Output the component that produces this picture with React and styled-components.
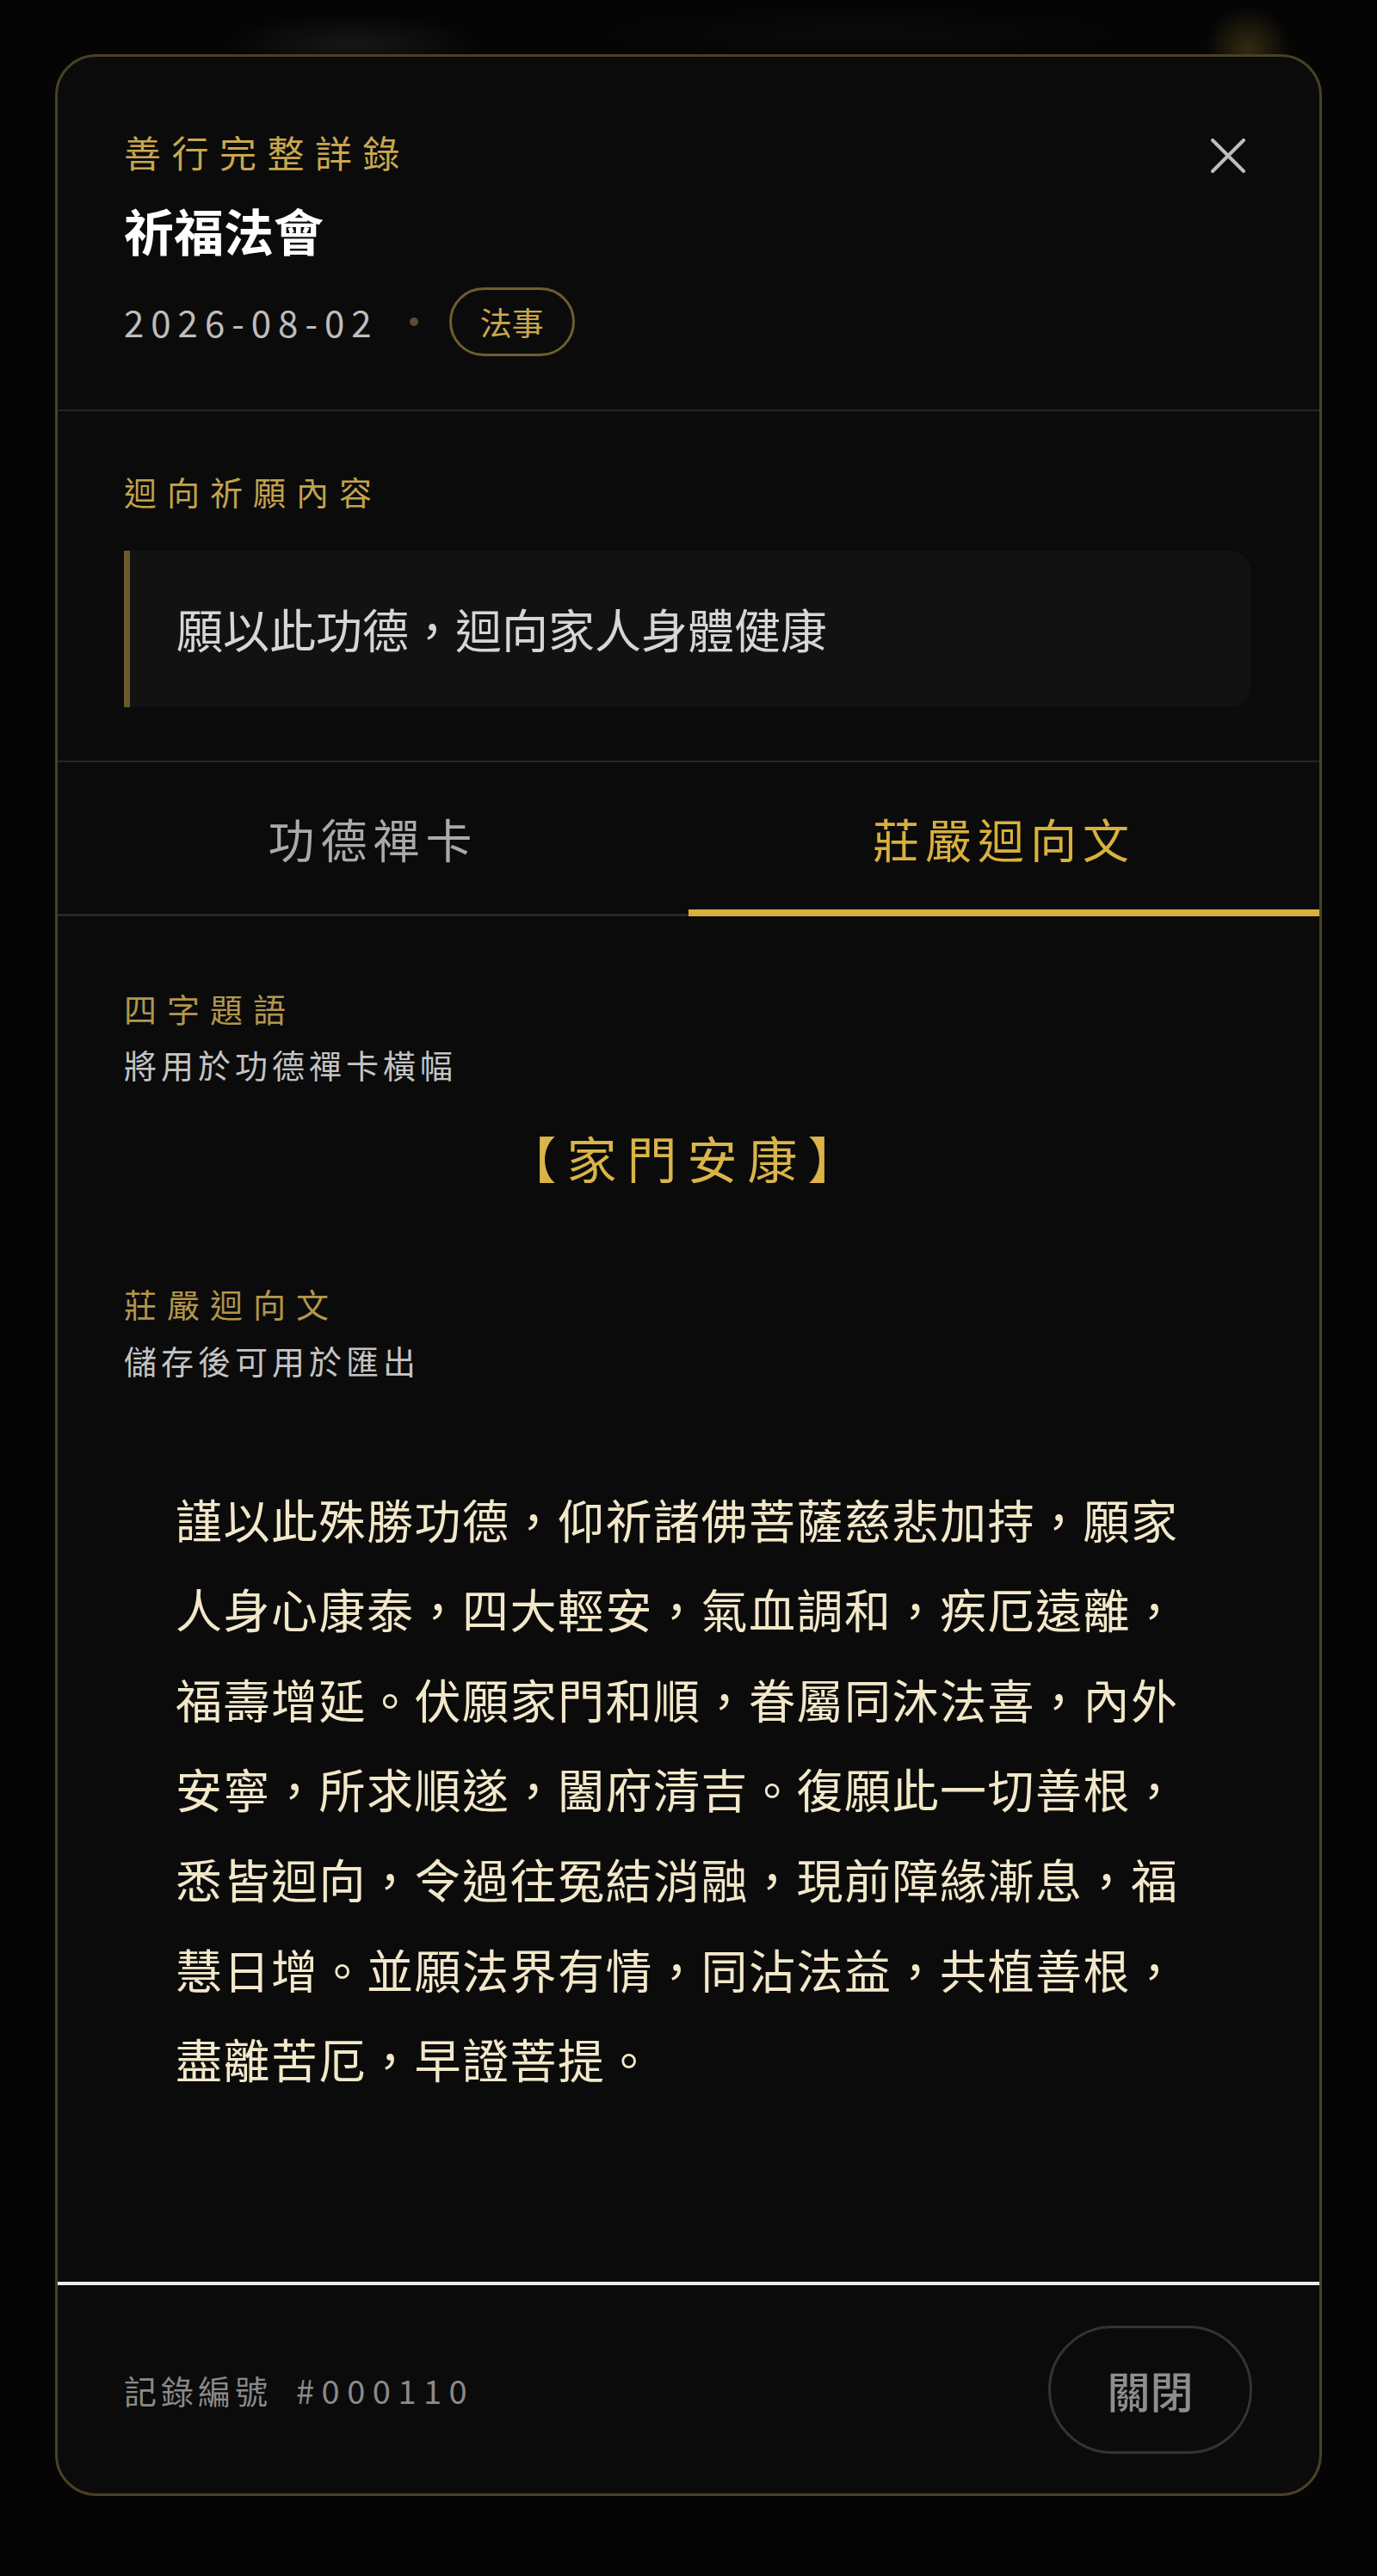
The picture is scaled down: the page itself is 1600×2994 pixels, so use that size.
import React, { useState } from 'react';
import styled, { createGlobalStyle } from 'styled-components';

const GlobalStyle = createGlobalStyle`
  html, body {
    margin: 0;
    padding: 0;
    background: #050505;
  }
  * { box-sizing: border-box; }
  body {
    font-family: "Noto Sans CJK TC", "Noto Sans", "Liberation Sans", sans-serif;
  }
`;

const Page = styled.div`
  min-height: 2994px;
  padding: 63px 64px 93px;
  background:
    radial-gradient(ellipse 150px 36px at 410px 52px, rgba(255,255,255,0.07), transparent),
    radial-gradient(circle 50px at 1450px 58px, rgba(214,176,60,0.22), transparent),
    radial-gradient(ellipse 320px 30px at 1000px 40px, rgba(255,255,255,0.025), transparent),
    #050505;
`;

const Sheet = styled.div`
  height: 2838px;
  display: flex;
  flex-direction: column;
  background: #0b0b0b;
  border: 3px solid #4a4126;
  border-radius: 48px;
  overflow: hidden;
`;

const Header = styled.header`
  display: flex;
  justify-content: space-between;
  align-items: flex-start;
  padding: 80px 74px 62px 77px;
  border-bottom: 2px solid #2a261e;
`;

const HeaderMain = styled.div`
  display: flex;
  flex-direction: column;
`;

const Eyebrow = styled.div`
  font-size: 43px;
  line-height: 1.4;
  letter-spacing: 12.5px;
  color: #c9a74e;
`;

const Title = styled.h1`
  margin: 24px 0 0;
  font-size: 58px;
  line-height: 1.3;
  font-weight: 700;
  color: #ffffff;
`;

const MetaRow = styled.div`
  margin-top: 28px;
  display: flex;
  align-items: center;
  gap: 36px;
`;

const DateText = styled.span`
  font-size: 42px;
  letter-spacing: 8px;
  color: #bdbdbd;
`;

const Dot = styled.span`
  width: 10px;
  height: 10px;
  border-radius: 50%;
  background: #5a4d2c;
`;

const TagPill = styled.span`
  height: 80px;
  display: inline-flex;
  align-items: center;
  padding: 0 33px;
  border: 3px solid #6e5d2e;
  border-radius: 40px;
  font-size: 37px;
  color: #c9a74e;
`;

const CloseButton = styled.button`
  width: 64px;
  height: 64px;
  margin-top: 3px;
  padding: 0;
  display: flex;
  align-items: center;
  justify-content: center;
  background: none;
  border: none;
  cursor: pointer;
`;

const Section = styled.section`
  padding: 66px 80px 62px 77px;
  border-bottom: 2px solid #2a261e;
`;

const SectionLabel = styled.div`
  font-size: 38px;
  line-height: 1.4;
  letter-spacing: 12px;
  color: ${p => p.$dim ? '#b3964a' : '#c2a24c'};
`;

const WishBox = styled.div`
  margin-top: 43px;
  padding: 48px 54px;
  background: #131212;
  border-left: 7px solid #6a5a2b;
  border-radius: 0 24px 24px 0;
  font-size: 54px;
  line-height: 1.6;
  color: #d6d6d6;
`;

const TabBar = styled.div`
  display: grid;
  grid-template-columns: 1fr 1fr;
  border-bottom: 3px solid #2a261e;
`;

const Tab = styled.button`
  position: relative;
  height: 176px;
  padding: 0;
  background: none;
  border: none;
  cursor: pointer;
  font-family: inherit;
  font-size: 54px;
  letter-spacing: 7px;
  color: ${p => p.$active ? '#d8b03e' : '#a9a9a9'};

  &::after {
    content: '';
    position: absolute;
    left: 0;
    right: 0;
    bottom: -3px;
    height: 8px;
    background: ${p => p.$active ? '#d8b03e' : 'transparent'};
  }
`;

const Body = styled.div`
  flex: 1;
  overflow: hidden;
  padding: 80px 80px 0 77px;
`;

const FieldHint = styled.div`
  margin-top: 10px;
  font-size: 38px;
  line-height: 1.5;
  letter-spacing: 5px;
  color: #c4c4c4;
`;

const Motto = styled.div`
  margin: 37px 0 99px;
  text-align: center;
  font-size: 58px;
  line-height: 1.5;
  letter-spacing: 12px;
  color: #dab449;
`;

const Prose = styled.p`
  margin: 105px 60px 0 60px;
  font-size: 54px;
  line-height: 104.6px;
  letter-spacing: 1.5px;
  color: #f2e8c9;
`;

const Footer = styled.footer`
  height: 246px;
  flex-shrink: 0;
  display: flex;
  align-items: center;
  justify-content: space-between;
  padding: 0 78px 0 77px;
  border-top: 4px solid #ececec;
`;

const RecordId = styled.div`
  display: flex;
  gap: 28px;
  font-size: 38px;
  letter-spacing: 5px;
  color: #8a8a8a;
`;

const RecordNo = styled.span`
  letter-spacing: 8.5px;
`;

const CloseAction = styled.button`
  width: 237px;
  height: 149px;
  border: 3px solid #333333;
  border-radius: 75px;
  background: none;
  cursor: pointer;
  font-family: inherit;
  font-size: 50px;
  font-weight: 500;
  color: #8e8e8e;
`;

const CloseIcon = () => (
  <svg width="40" height="40" viewBox="0 0 40 40" fill="none">
    <path d="M2 2 L38 38 M38 2 L2 38" stroke="#bdbdbd" strokeWidth="4" strokeLinecap="round" />
  </svg>
);

const prose =
  '謹以此殊勝功德，仰祈諸佛菩薩慈悲加持，願家人身心康泰，四大輕安，氣血調和，疾厄遠離，福壽增延。伏願家門和順，眷屬同沐法喜，內外安寧，所求順遂，闔府清吉。復願此一切善根，悉皆迴向，令過往冤結消融，現前障緣漸息，福慧日增。並願法界有情，同沾法益，共植善根，盡離苦厄，早證菩提。';

export default function App() {
  const [tab, setTab] = useState('text');

  return (
    <>
      <GlobalStyle />
      <Page>
        <Sheet>
          <Header>
            <HeaderMain>
              <Eyebrow>善行完整詳錄</Eyebrow>
              <Title>祈福法會</Title>
              <MetaRow>
                <DateText>2026-08-02</DateText>
                <Dot />
                <TagPill>法事</TagPill>
              </MetaRow>
            </HeaderMain>
            <CloseButton aria-label="關閉">
              <CloseIcon />
            </CloseButton>
          </Header>

          <Section>
            <SectionLabel>迴向祈願內容</SectionLabel>
            <WishBox>願以此功德，迴向家人身體健康</WishBox>
          </Section>

          <TabBar>
            <Tab $active={tab === 'card'} onClick={() => setTab('card')}>功德禪卡</Tab>
            <Tab $active={tab === 'text'} onClick={() => setTab('text')}>莊嚴迴向文</Tab>
          </TabBar>

          <Body>
            <SectionLabel $dim>四字題語</SectionLabel>
            <FieldHint>將用於功德禪卡橫幅</FieldHint>
            <Motto>【家門安康】</Motto>
            <SectionLabel $dim>莊嚴迴向文</SectionLabel>
            <FieldHint>儲存後可用於匯出</FieldHint>
            <Prose>{prose}</Prose>
          </Body>

          <Footer>
            <RecordId>
              <span>記錄編號</span>
              <RecordNo>#000110</RecordNo>
            </RecordId>
            <CloseAction>關閉</CloseAction>
          </Footer>
        </Sheet>
      </Page>
    </>
  );
}
